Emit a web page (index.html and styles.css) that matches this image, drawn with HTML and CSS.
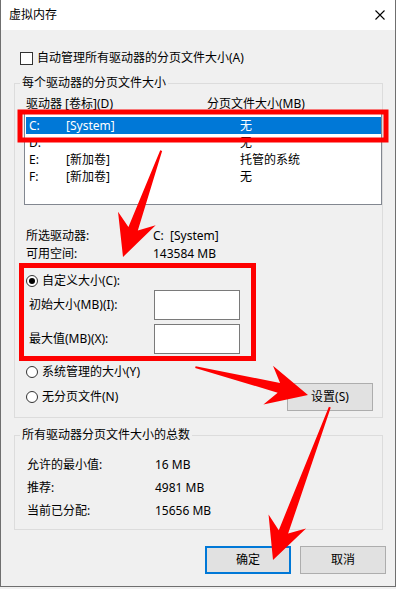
FILE: index.html
```html
<!DOCTYPE html>
<html lang="zh-CN">
<head>
<meta charset="utf-8">
<title>虚拟内存</title>
<link rel="stylesheet" href="styles.css">
</head>
<body>
<div class="window">
  <div class="titlebar">
    <span class="title">虚拟内存</span>
    <svg class="close" viewBox="0 0 10 10" width="10" height="10"><path d="M0.5 0.5L9.5 9.5M9.5 0.5L0.5 9.5" stroke="#000" stroke-width="1.1" fill="none"/></svg>
  </div>
  <div class="content">
    <div class="check-row"><span class="checkbox"></span><span>自动管理所有驱动器的分页文件大小(A)</span></div>

    <fieldset class="group group-drives">
      <legend>每个驱动器的分页文件大小</legend>
      <div class="list-header"><span>驱动器 [卷标](D)</span><span>分页文件大小(MB)</span></div>
      <div class="listbox">
        <div class="row selected"><span>C:</span><span>[System]</span><span>无</span></div>
        <div class="row"><span>D:</span><span></span><span>无</span></div>
        <div class="row"><span>E:</span><span>[新加卷]</span><span>托管的系统</span></div>
        <div class="row"><span>F:</span><span>[新加卷]</span><span>无</span></div>
      </div>
      <div class="info">
        <span>所选驱动器:</span><span>C:&nbsp;&nbsp;[System]</span>
        <span>可用空间:</span><span>143584 MB</span>
      </div>
      <div class="radio-row radio-custom"><span class="radio checked"></span><span>自定义大小(C):</span></div>
      <div class="size-row size-first"><span>初始大小(MB)(I):</span><span class="input"></span></div>
      <div class="size-row size-second"><span>最大值(MB)(X):</span><span class="input"></span></div>
      <div class="radio-row radio-sys"><span class="radio"></span><span>系统管理的大小(Y)</span></div>
      <div class="none-row">
        <div class="radio-row"><span class="radio"></span><span>无分页文件(N)</span></div>
        <button class="btn btn-set"><span class="btn-label">设置(S)</span></button>
      </div>
    </fieldset>

    <fieldset class="group group-totals">
      <legend>所有驱动器分页文件大小的总数</legend>
      <div class="totals">
        <span>允许的最小值:</span><span>16 MB</span>
        <span>推荐:</span><span>4981 MB</span>
        <span>当前已分配:</span><span>15656 MB</span>
      </div>
    </fieldset>

    <div class="buttons">
      <button class="btn btn-default"><span class="btn-label">确定</span></button>
      <button class="btn"><span class="btn-label">取消</span></button>
    </div>
  </div>
</div>

<svg class="annot" width="396" height="589" viewBox="0 0 396 589">
  <rect x="20" y="112" width="366" height="28" fill="none" stroke="#fe0000" stroke-width="5"/>
  <rect x="21.5" y="265.5" width="232" height="93" fill="none" stroke="#fe0000" stroke-width="5"/>
  <path transform="translate(123 257) rotate(109.75)" d="M0 0L-41 -20L-30 -5L-113 -1L-113 1L-30 5L-41 20Z" fill="#fe0000"/>
  <path transform="translate(308 395) rotate(13.9)" d="M0 0L-41 -20L-30 -5L-116 -1L-116 1L-30 5L-41 20Z" fill="#fe0000"/>
  <path transform="translate(273 560) rotate(110.4)" d="M0 0L-41 -20L-30 -5L-163 -1L-163 1L-30 5L-41 20Z" fill="#fe0000"/>
</svg>
</body>
</html>
```

FILE: styles.css
```css
* { box-sizing: border-box; }

html, body {
  margin: 0;
  padding: 0;
  background: #f0f0f0;
}

body {
  position: relative;
  width: 396px;
  height: 589px;
  overflow: hidden;
  font-family: "Noto Sans", "Noto Sans CJK SC", sans-serif;
  font-size: 12px;
  color: #000;
}

.window {
  position: relative;
  width: 396px;
  height: 587px;
  background: #f0f0f0;
  border: 1px solid #6f6f6f;
  border-top: none;
}

.titlebar {
  height: 30px;
  background: #fff;
  display: flex;
  align-items: center;
  justify-content: space-between;
  padding: 0 10px 0 8px;
}

.title { line-height: 16px; }

.close { display: block; }

.content {
  padding: 0 12px 0 13px;
}

.check-row {
  display: flex;
  align-items: center;
  gap: 4px;
  height: 16px;
  margin: 20px 0 0 6px;
  line-height: 16px;
}

.checkbox {
  width: 13px;
  height: 13px;
  border: 1px solid #333;
  background: #fff;
  flex: none;
}

.group {
  margin: 10px 0 0;
  border: 1px solid #dcdcdc;
  min-width: 0;
}

.group legend {
  padding: 0 2px;
  margin-left: -4px;
  line-height: 14px;
}

.group-drives { padding: 6px 0 6px 9px; }
.group-totals { padding: 11px 0 7px 9px; }

.list-header {
  display: grid;
  grid-template-columns: 181px 1fr;
  margin-left: 2px;
  line-height: 16px;
}

.listbox {
  margin-top: 1px;
  height: 92px;
  background: #fff;
  border: 1px solid #828790;
  padding: 3px 0 0 1px;
}

.row {
  display: grid;
  grid-template-columns: 37px 174px 1fr;
  height: 17px;
  line-height: 17px;
  padding-left: 3px;
}

.row.selected {
  background: #0078d7;
  color: #fff;
}

.info {
  display: grid;
  grid-template-columns: 127px 1fr;
  margin: 22px 0 0 2px;
  line-height: 18px;
}

.radio-row {
  display: flex;
  align-items: center;
  gap: 4px;
  margin-left: 2px;
  line-height: 16px;
}

.radio {
  width: 12px;
  height: 12px;
  border: 1px solid #333;
  border-radius: 50%;
  background: #fff;
  display: flex;
  align-items: center;
  justify-content: center;
  flex: none;
}

.radio.checked::after {
  content: "";
  width: 6px;
  height: 6px;
  border-radius: 50%;
  background: #000;
}

.radio-custom { margin-top: 10px; }
.radio-sys { margin-top: 10px; }

.size-row {
  display: grid;
  grid-template-columns: 125px 86px;
  align-items: center;
  margin-left: 5px;
  line-height: 16px;
}

.size-first { margin-top: 1px; }
.size-second { margin-top: 4px; }

.input {
  display: block;
  height: 30px;
  border: 1px solid #7a7a7a;
  background: #fff;
}

.none-row {
  display: flex;
  justify-content: space-between;
  align-items: center;
  height: 28px;
  margin-top: 3px;
}

.btn {
  width: 86px;
  height: 28px;
  padding: 0;
  background: #e1e1e1;
  border: 1px solid #adadad;
  font: inherit;
  color: #000;
  line-height: 16px;
}

.btn-label {
  position: relative;
  z-index: 2;
}

.btn-set { margin-right: 9px; }

.btn-default { border: 2px solid #0078d7; }

.totals {
  display: grid;
  grid-template-columns: 128px 1fr;
  margin-left: 3px;
  line-height: 23px;
}

.buttons {
  display: flex;
  justify-content: flex-end;
  gap: 9px;
  margin: 16px -3px 0 0;
}

.annot {
  position: absolute;
  top: 0;
  left: 0;
  z-index: 1;
  pointer-events: none;
}
```
